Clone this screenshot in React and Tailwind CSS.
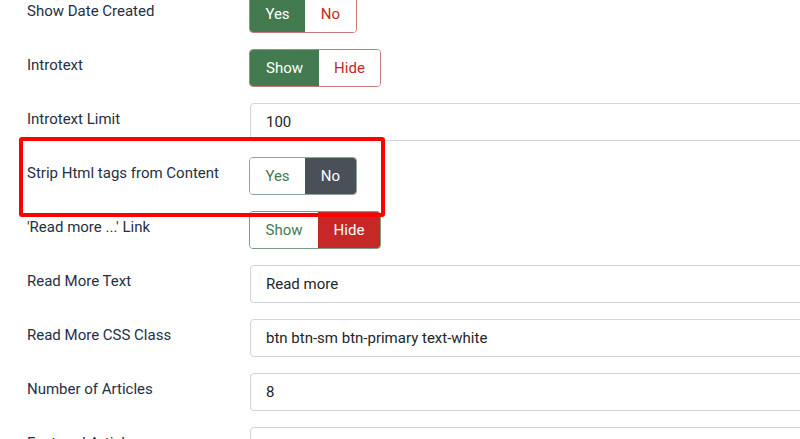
import { useState } from "react";

const rows = [
  { label: "Show Date Created", type: "toggle", options: ["Yes", "No"], value: 0, widths: ["w-[55px]", "w-[51px]"] },
  { label: "Introtext", type: "toggle", options: ["Show", "Hide"], value: 0, widths: ["w-[69px]", "w-[61px]"] },
  { label: "Introtext Limit", type: "input", value: "100" },
  { label: "Strip Html tags from Content", type: "toggle", options: ["Yes", "No"], value: 1, widths: ["w-[55px]", "w-[51px]"], dark: true },
  { label: "'Read more ...' Link", type: "toggle", options: ["Show", "Hide"], value: 1, widths: ["w-[68px]", "w-[62px]"] },
  { label: "Read More Text", type: "input", value: "Read more" },
  { label: "Read More CSS Class", type: "input", value: "btn btn-sm btn-primary text-white" },
  { label: "Number of Articles", type: "input", value: "8" },
  { label: "Featured Articles", type: "input", value: "" },
];

function Toggle({ row }) {
  const [value, setValue] = useState(row.value);
  // first option = green (on), second = red, unless the row uses the dark style
  const borderColor = value === 0 ? "border-[#c8797a]" : row.dark ? "border-[#8fa596]" : "border-[#7a9d83]";
  return (
    <div className={`flex h-[38px] shrink-0 rounded-[4px] border overflow-hidden ${borderColor}`}>
      {row.options.map((opt, i) => {
        const active = value === i;
        let cls = "";
        if (active && i === 0) cls = "bg-[#437a50] text-white";
        else if (active && row.dark) cls = "bg-[#4a5058] text-white";
        else if (active) cls = "bg-[#c62828] text-white";
        else if (i === 0) cls = "bg-white text-[#437a50]";
        else cls = "bg-white text-[#c62828]";
        return (
          <button
            key={opt}
            onClick={() => setValue(i)}
            className={`${row.widths[i]} h-full flex items-center justify-center text-[15px] ${cls}`}
          >
            {opt}
          </button>
        );
      })}
    </div>
  );
}

export default function App() {
  return (
    <main className="relative w-[800px] h-[439px] overflow-hidden bg-white font-['Roboto',sans-serif]">
      <div className="-mt-[5px] flex flex-col gap-4">
        {rows.map((row) => (
          <div key={row.label} className="flex items-start">
            <label className="w-[249px] shrink-0 pl-[27px] pt-[5px] text-[15px] leading-[22px] text-[#1f2f45]">
              {row.label}
            </label>
            {row.type === "toggle" ? (
              <Toggle row={row} />
            ) : (
              <div className="ml-px flex h-[38px] w-[600px] shrink-0 items-center rounded-[4px] border border-[#cdd5de] pl-[15px] text-[15px] text-[#22262a]">
                {row.value}
              </div>
            )}
          </div>
        ))}
      </div>

      {/* highlight drawn over the "Strip Html tags" row */}
      <div className="pointer-events-none absolute left-[19px] top-[137px] h-[80px] w-[366px] rounded-[3px] border-[4px] border-[#ff0000]" />
    </main>
  );
}
